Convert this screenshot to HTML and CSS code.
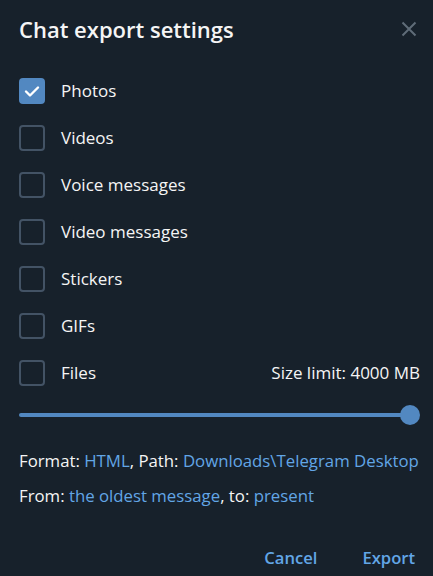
FILE: index.html
```html
<!DOCTYPE html>
<html>
<head>
<meta charset="utf-8">
<link rel="stylesheet" href="styles.css">
</head>
<body>
<div class="dialog">
  <div class="header">
    <div class="title">Chat export settings</div>
    <svg class="close" width="16" height="16" viewBox="0 0 16 16"><path d="M1.5 1.5 L14.5 14.5 M14.5 1.5 L1.5 14.5" stroke="#5f6c78" stroke-width="2" fill="none"/></svg>
  </div>
  <div class="options">
    <div class="row">
      <span class="box checked"><svg width="26" height="26" viewBox="0 0 26 26"><path d="M7 13.5 L11 17.5 L19 9.5" stroke="#fff" stroke-width="2.4" fill="none" stroke-linecap="round" stroke-linejoin="round"/></svg></span>
      <span class="label">Photos</span>
    </div>
    <div class="row"><span class="box"></span><span class="label">Videos</span></div>
    <div class="row"><span class="box"></span><span class="label">Voice messages</span></div>
    <div class="row"><span class="box"></span><span class="label">Video messages</span></div>
    <div class="row"><span class="box"></span><span class="label">Stickers</span></div>
    <div class="row"><span class="box"></span><span class="label">GIFs</span></div>
    <div class="row"><span class="box"></span><span class="label">Files</span><span class="limit">Size limit: 4000 MB</span></div>
  </div>
  <div class="slider">
    <div class="track"></div>
    <div class="knob"></div>
  </div>
  <div class="info">
    <div class="line">Format: <span class="link">HTML</span>, Path: <span class="link">Downloads\Telegram Desktop</span></div>
    <div class="line">From: <span class="link">the oldest message</span>, to: <span class="link">present</span></div>
  </div>
  <div class="buttons">
    <span class="btn">Cancel</span>
    <span class="btn">Export</span>
  </div>
</div>
</body>
</html>
```
FILE: styles.css
```css
html, body {
  margin: 0;
  padding: 0;
  background: #17212b;
}
body {
  font-family: "Open Sans", "Noto Sans", sans-serif;
  color: #f5f5f5;
  width: 433px;
  height: 576px;
  overflow: hidden;
}
.dialog {
  padding: 0 13px 0 19px;
}
.header {
  display: flex;
  justify-content: space-between;
  align-items: center;
  height: 28px;
  margin-top: 15px;
}
.title {
  font-size: 22px;
  font-weight: 600;
  line-height: 28px;
  color: #f5f5f5;
}
.close {
  margin-right: 3px;
}
.options {
  margin-top: 35px;
  display: flex;
  flex-direction: column;
  gap: 21px;
}
.row {
  display: flex;
  align-items: center;
  height: 26px;
}
.box {
  width: 22px;
  height: 22px;
  border: 2px solid #435365;
  border-radius: 4px;
  flex: none;
  position: relative;
}
.box.checked {
  background: #5288c1;
  border-color: #5288c1;
}
.box svg {
  position: absolute;
  left: -2px;
  top: -2px;
}
.label {
  margin-left: 16px;
  font-size: 17px;
  line-height: 22px;
}
.limit {
  margin-left: auto;
  font-size: 17px;
  line-height: 22px;
}
.slider {
  position: relative;
  height: 20px;
  margin-top: 19px;
}
.track {
  position: absolute;
  left: 0;
  right: 10px;
  top: 8px;
  height: 4px;
  border-radius: 2px;
  background: #5288c1;
}
.knob {
  position: absolute;
  right: 0;
  top: 0;
  width: 20px;
  height: 20px;
  border-radius: 50%;
  background: #5288c1;
}
.info {
  margin-top: 26px;
  display: flex;
  flex-direction: column;
  gap: 15px;
}
.line {
  font-size: 16.8px;
  line-height: 20px;
}
.link {
  color: #62a6e6;
}
.buttons {
  display: flex;
  justify-content: flex-end;
  gap: 45px;
  margin-top: 42px;
  padding-right: 5px;
}
.btn {
  font-size: 16.6px;
  font-weight: 600;
  line-height: 20px;
  color: #62a6e6;
}
```
